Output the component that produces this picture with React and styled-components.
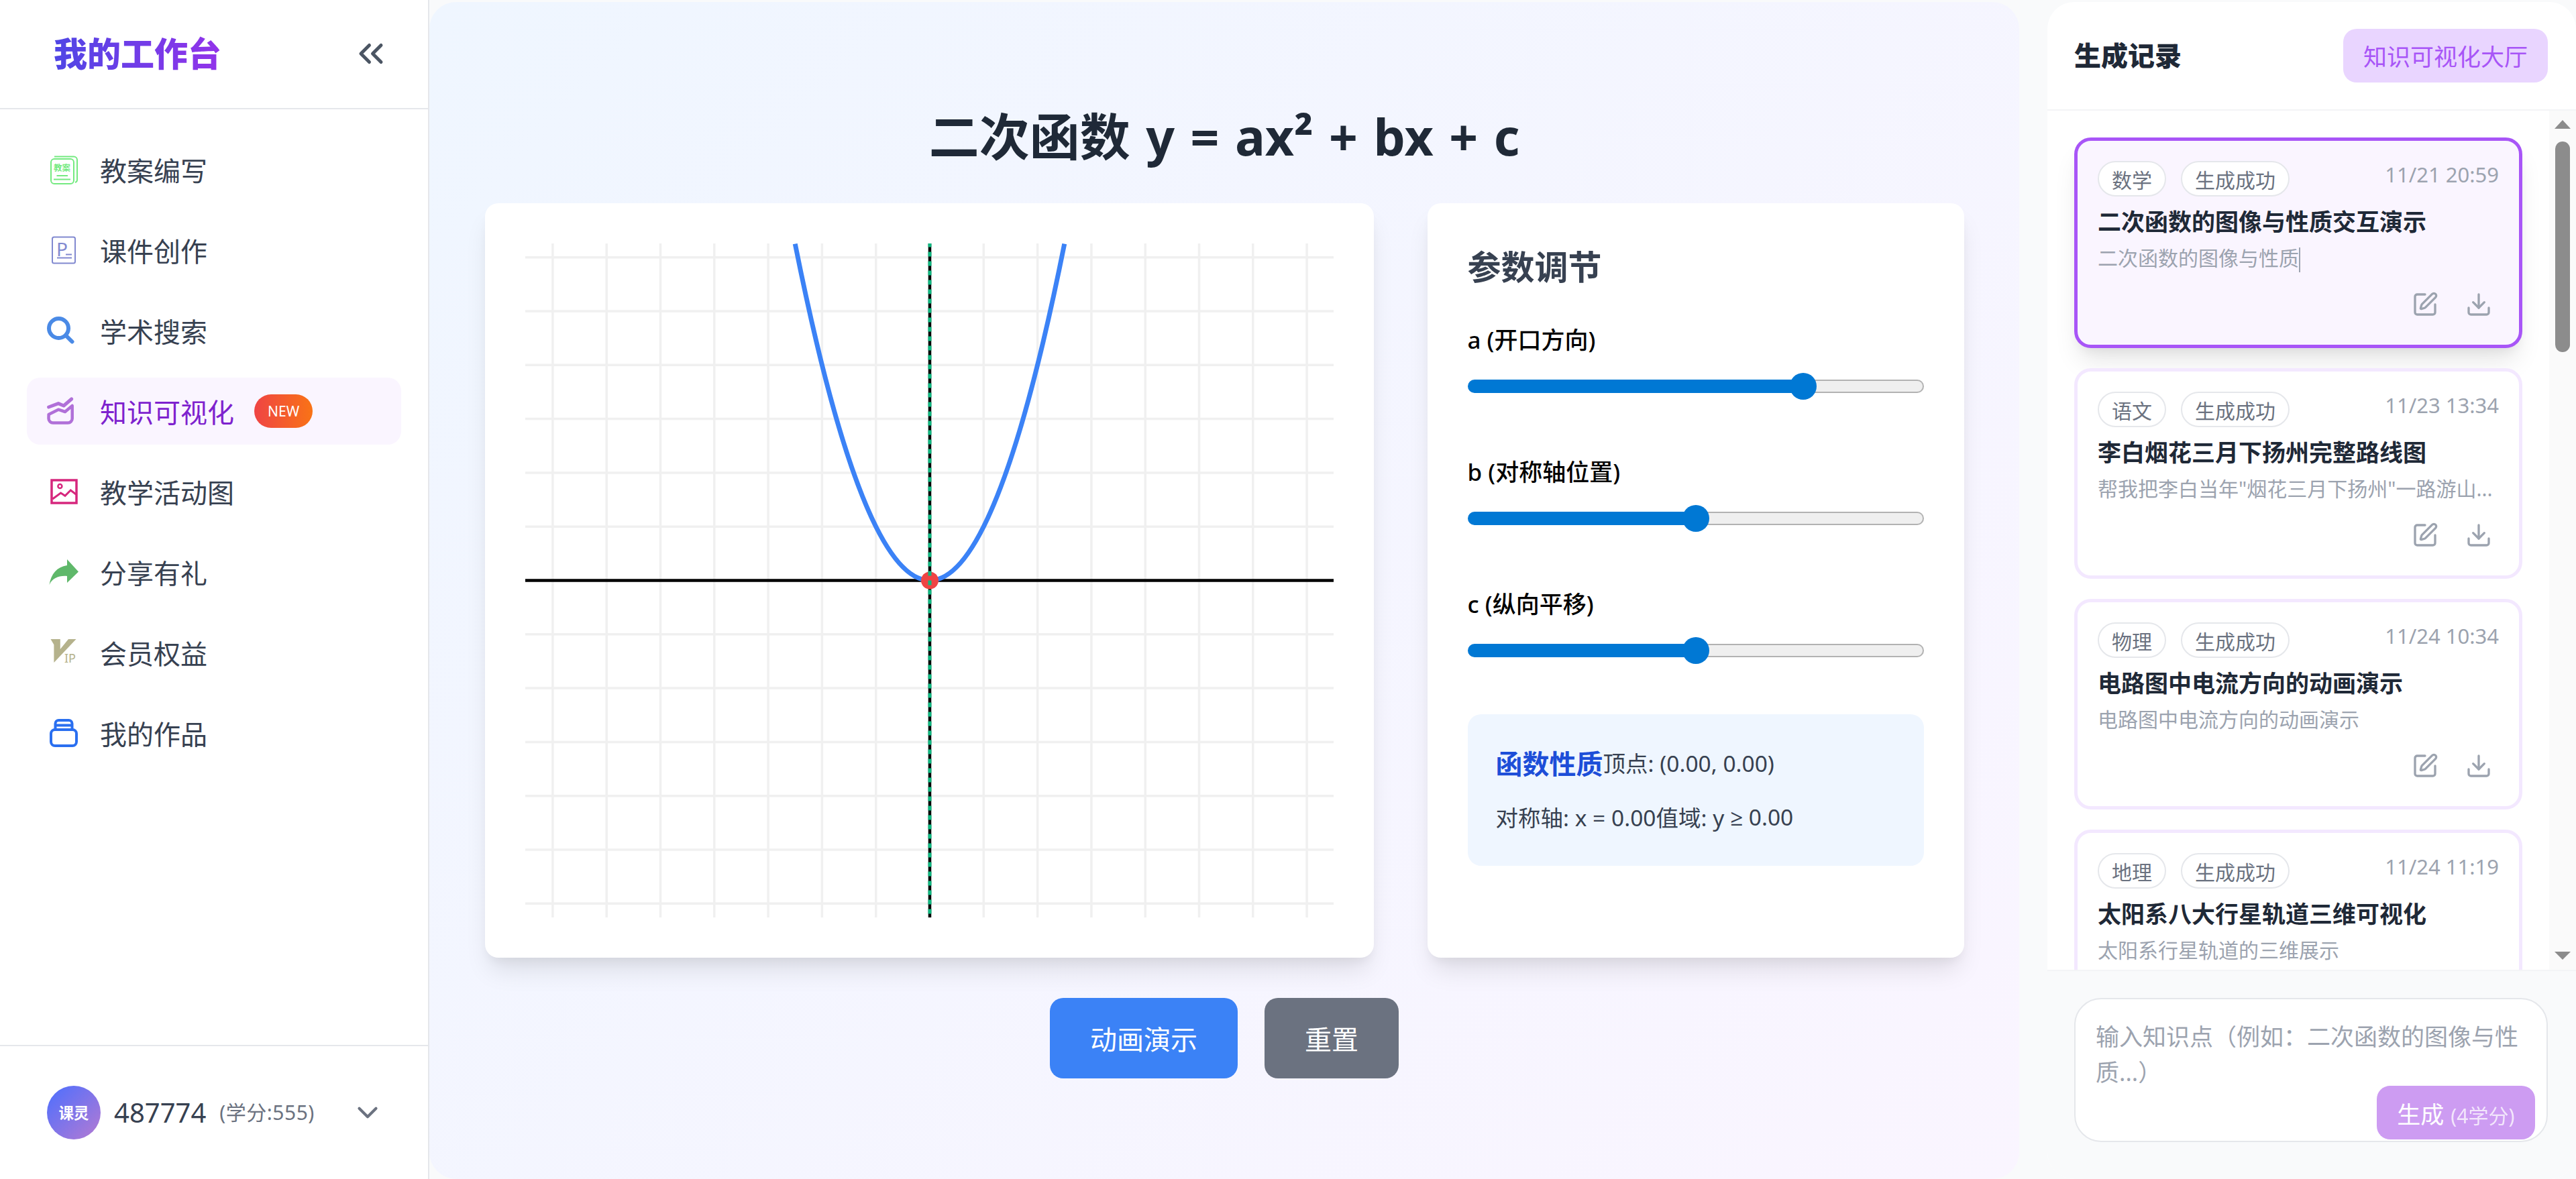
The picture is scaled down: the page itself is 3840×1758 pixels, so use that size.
import React from "react";
import styled, { createGlobalStyle } from "styled-components";
import { ChevronsLeft, ChevronDown, SquarePen, Download } from "lucide-react";

const FONT = `"Noto Sans", "Noto Sans CJK SC", sans-serif`;

const GlobalStyle = createGlobalStyle`
  html, body {
    margin: 0;
    padding: 0;
    background: #f9fafb;
    font-family: ${FONT};
  }
  * { box-sizing: border-box; }
`;

const Page = styled.div`
  display: flex;
  width: 3840px;
  height: 1758px;
  overflow: hidden;
  background: #f9fafb;
`;

/* sidebar */
const Sidebar = styled.aside`
  width: 640px;
  flex-shrink: 0;
  display: flex;
  flex-direction: column;
  background: #fff;
  border-right: 2.5px solid #e5e7eb;
`;
const SideHead = styled.div`
  height: 162.5px;
  display: flex;
  align-items: center;
  justify-content: space-between;
  padding: 0 55px 0 80px;
  border-bottom: 2.5px solid #e5e7eb;
  color: #4b5563;
`;
const Brand = styled.div`
  font-size: 50px;
  line-height: 70px;
  font-weight: 900;
  background: linear-gradient(90deg, #4f46e5, #9333ea);
  -webkit-background-clip: text;
  background-clip: text;
  color: transparent;
`;
const Nav = styled.nav`
  flex: 1;
  display: flex;
  flex-direction: column;
  gap: 20px;
  padding: 40px;
`;
const NavItem = styled.a`
  height: 100px;
  display: flex;
  align-items: center;
  gap: 29px;
  padding: 0 30px;
  border-radius: 20px;
  font-size: 40px;
  color: ${(p) => (p.$active ? "#7e22ce" : "#374151")};
  background: ${(p) => (p.$active ? "#faf5ff" : "transparent")};
  svg { flex-shrink: 0; }
`;
const NavLabel = styled.span`
  line-height: 60px;
  padding-top: 4px;
`;
const NewBadge = styled.span`
  height: 50px;
  margin-left: 1px;
  padding: 0 20px;
  display: flex;
  align-items: center;
  border-radius: 25px;
  background: linear-gradient(90deg, #ef4444, #f97316);
  color: #fff;
  font-size: 21px;
  line-height: 30px;
`;
const SideFoot = styled.div`
  height: 200.5px;
  display: flex;
  align-items: center;
  padding: 0 65px 0 70px;
  border-top: 2.5px solid #e5e7eb;
`;
const Avatar = styled.div`
  width: 80px;
  height: 80px;
  flex-shrink: 0;
  display: flex;
  align-items: center;
  justify-content: center;
  border-radius: 50%;
  background: linear-gradient(135deg, #4b6fff, #b57ad2);
  color: #fff;
  font-size: 22.5px;
  font-weight: 700;
`;
const UserName = styled.span`
  margin-left: 20px;
  font-size: 40px;
  line-height: 60px;
  color: #374151;
`;
const Credits = styled.span`
  margin-left: 20px;
  font-size: 30px;
  line-height: 45px;
  letter-spacing: 0.5px;
  color: #6b7280;
`;
const FootChevron = styled(ChevronDown)`
  margin-left: auto;
  color: #6b7280;
`;

/* middle */
const Main = styled.main`
  width: 2370px;
  flex-shrink: 0;
  margin: 2.5px 42px 0 0;
  padding-top: 155px;
  display: flex;
  flex-direction: column;
  align-items: center;
  border-radius: 40px;
  background: linear-gradient(135deg, #eff6ff, #faf5ff);
`;
const Heading = styled.h1`
  margin: 0 0 55.5px;
  font-size: 75px;
  line-height: 90px;
  font-weight: 700;
  word-spacing: 4px;
  color: #1f2937;
`;
const Cards = styled.div`
  display: flex;
  gap: 80px;
  height: 1125px;
`;
const Card = styled.section`
  width: ${(p) => p.$w}px;
  padding: 60px;
  background: #fff;
  border-radius: 20px;
  box-shadow: 0 25px 37.5px -7.5px rgba(0, 0, 0, 0.1), 0 10px 15px -5px rgba(0, 0, 0, 0.05);
`;
const Plot = styled.svg`
  display: block;
  width: 1205px;
  height: 1005px;
  filter: blur(0.5px);
`;
const PanelTitle = styled.h2`
  margin: 0 0 48px;
  font-size: 50px;
  line-height: 70px;
  font-weight: 700;
  color: #374151;
`;
const Param = styled.div`
  margin-bottom: 82px;
`;
const ParamLabel = styled.label`
  display: block;
  height: 52px;
  margin-bottom: 23px;
  font-size: 35px;
  line-height: 52px;
  font-weight: 500;
  color: #000;
`;
const Range = styled.input.attrs({ type: "range" })`
  display: block;
  width: 680px;
  height: 40px;
  margin: 0;
  background: transparent;
  -webkit-appearance: none;
  appearance: none;
  &::-webkit-slider-runnable-track {
    height: 20px;
    border: 2.5px solid transparent;
    border-radius: 10px;
    background:
      linear-gradient(90deg, #0078d4 ${(p) => p.$fill}%, transparent ${(p) => p.$fill}%) border-box,
      linear-gradient(#efefef, #efefef) padding-box,
      linear-gradient(#b2b2b2, #b2b2b2) border-box;
  }
  &::-webkit-slider-thumb {
    -webkit-appearance: none;
    width: 40px;
    height: 40px;
    margin-top: -12.5px;
    border-radius: 50%;
    background: #0078d4;
  }
`;
const Props = styled.div`
  margin-top: -7px;
  height: 226px;
  padding: 40px 42px;
  display: flex;
  flex-direction: column;
  gap: 18px;
  border-radius: 20px;
  background: #eff6ff;
`;
const PropRow = styled.div`
  height: 63px;
  display: flex;
  align-items: center;
  font-size: 33.5px;
  color: #374151;
  white-space: pre;
`;
const PropHead = styled.strong`
  font-size: 40px;
  font-weight: 700;
  color: #1d4ed8;
`;
const MathSign = styled.span`
  font-family: "Open Sans", sans-serif;
`;
const Buttons = styled.div`
  display: flex;
  gap: 40px;
  margin-top: 60px;
`;
const Btn = styled.button`
  height: 120px;
  padding: 0 60px;
  border: 0;
  border-radius: 20px;
  font-family: ${FONT};
  font-size: 40px;
  color: #fff;
  background: ${(p) => p.$bg};
`;

/* history column */
const History = styled.aside`
  width: 788px;
  flex-shrink: 0;
  margin-top: 2.5px;
  display: flex;
  flex-direction: column;
  overflow: hidden;
  background: #fff;
  border-radius: 40px;
`;
const HistoryHead = styled.div`
  height: 162.5px;
  flex-shrink: 0;
  display: flex;
  align-items: center;
  justify-content: space-between;
  padding: 0 42px 0 40px;
  border-bottom: 2.5px solid #f3f4f6;
`;
const HistoryTitle = styled.h3`
  margin: 0;
  font-size: 40px;
  line-height: 60px;
  font-weight: 900;
  color: #1f2937;
`;
const HallButton = styled.button`
  height: 80px;
  padding: 0 30px;
  border: 0;
  border-radius: 20px;
  background: #e9d5ff;
  color: #a855f7;
  font-family: ${FONT};
  font-size: 35px;
`;
const HistoryBody = styled.div`
  height: 1281px;
  flex-shrink: 0;
  display: flex;
  overflow: hidden;
`;
const RecordList = styled.div`
  flex: 1;
  display: flex;
  flex-direction: column;
  gap: 30px;
  padding: 40px;
  overflow: hidden;
`;
const Record = styled.article`
  height: 314px;
  flex-shrink: 0;
  display: flex;
  flex-direction: column;
  padding: 30px;
  border-radius: 25px;
  border: 5px solid ${(p) => (p.$selected ? "#a855f7" : "#f3e8ff")};
  background: ${(p) => (p.$selected ? "#faf5ff" : "#fff")};
  box-shadow: ${(p) =>
    p.$selected ? "0 25px 37.5px -7.5px rgba(0,0,0,0.1), 0 10px 15px -5px rgba(0,0,0,0.05)" : "none"};
`;
const RecordTop = styled.div`
  display: flex;
  align-items: flex-start;
  gap: 22px;
`;
const Tag = styled.span`
  height: 53px;
  padding: 0 19px;
  display: flex;
  align-items: center;
  border: 2.5px solid #e5e7eb;
  border-radius: 27px;
  background: #fff;
  font-size: 30px;
  color: #6b7280;
`;
const RecordDate = styled.span`
  margin-left: auto;
  font-size: 31px;
  line-height: 40px;
  color: #9ca3af;
`;
const RecordTitle = styled.div`
  margin-top: 12px;
  font-size: 35px;
  line-height: 52.5px;
  font-weight: 700;
  color: #1f2937;
  white-space: nowrap;
`;
const RecordDesc = styled.div`
  margin-top: 4px;
  font-size: 30px;
  line-height: 45px;
  color: #9ca3af;
  white-space: nowrap;
`;
const Caret = styled.span`
  display: inline-block;
  width: 1.5px;
  height: 37px;
  vertical-align: middle;
  background: #9ca3af;
`;
const RecordActions = styled.div`
  margin-top: auto;
  display: flex;
  justify-content: flex-end;
  gap: 20px;
`;
const IconBtn = styled.span`
  width: 60px;
  height: 60px;
  display: flex;
  align-items: center;
  justify-content: center;
  color: #9ca3af;
`;
const Rail = styled.div`
  width: 40px;
  flex-shrink: 0;
  padding: 14px 0 15px;
  display: flex;
  flex-direction: column;
  align-items: center;
  background: #fafafa;
`;
const RailThumb = styled.div`
  width: 22px;
  height: 314px;
  margin-top: 19px;
  margin-bottom: auto;
  border-radius: 11px;
  background: #8c8c8c;
`;
const Composer = styled.div`
  flex: 1;
  padding: 40px 42.5px 55px 40px;
  border-top: 2.5px solid #f3f4f6;
  background: #f9fafb;
`;
const InputBox = styled.div`
  position: relative;
  height: 214.5px;
  border: 2.5px solid #e5e7eb;
  border-radius: 40px;
  background: #fff;
`;
const Prompt = styled.textarea`
  display: block;
  width: 100%;
  height: 100%;
  padding: 30px;
  border: 0;
  outline: 0;
  resize: none;
  background: transparent;
  font-family: ${FONT};
  font-size: 35px;
  line-height: 52.5px;
  &::placeholder { color: #9ca3af; opacity: 1; }
`;
const GenerateBtn = styled.button`
  position: absolute;
  right: 17px;
  bottom: 1.5px;
  height: 80px;
  padding: 0 30px;
  border: 0;
  border-radius: 20px;
  background: #cd9cf2;
  color: #fff;
  font-family: ${FONT};
  font-size: 35px;
  white-space: nowrap;
`;
const Cost = styled.span`
  margin-left: 10px;
  font-size: 30px;
  opacity: 0.75;
`;

/* drawn nav icons, all in a 50 box */
const LessonIcon = () => (
  <svg width="50" height="50" viewBox="0 0 50 50" fill="none" stroke="#74ea80" strokeWidth="2">
    <rect x="6" y="9" width="34" height="37" rx="5" />
    <path d="M11 5.5h29a5 5 0 0 1 5 5V40a4 4 0 0 1-3 4" />
    <text x="10" y="27" fontSize="12.5" fontWeight="700" fill="#74ea80" stroke="none">教案</text>
    <path d="M14.5 34H31M10 39.5h25" />
  </svg>
);
const SlideIcon = () => (
  <svg width="50" height="50" viewBox="0 0 50 50" fill="none" stroke="#8189d0" strokeWidth="2">
    <rect x="8" y="5.5" width="34" height="39" rx="2.5" />
    <text x="14" y="34" fontSize="28" fill="#8189d0" stroke="none">P</text>
    <path d="M28 31.5h9M15 36.5h22" strokeWidth="2" />
  </svg>
);
const SearchIcon = () => (
  <svg width="50" height="50" viewBox="0 0 50 50" fill="none" stroke="#4a8ae6" strokeWidth="6" strokeLinecap="round">
    <circle cx="17.5" cy="21.5" r="14.5" />
    <path d="M28.5 32.5L37.5 41.5" />
  </svg>
);
const ChartIcon = () => (
  <svg width="50" height="50" viewBox="0 0 50 50" fill="none" stroke="#b070d8" strokeWidth="5" strokeLinecap="round" strokeLinejoin="round">
    <path d="M2.6 19L17 13.6L25 17L36.6 7" />
    <path d="M2.6 30L17 22.7L27 26L37.7 17V36a6.5 6.5 0 0 1-6.5 6.5H9a6.5 6.5 0 0 1-6.5-6.5z" strokeWidth="4.5" />
  </svg>
);
const PictureIcon = () => (
  <svg width="50" height="50" viewBox="0 0 50 50" fill="none" stroke="#d6277d" strokeWidth="3.5">
    <rect x="7" y="8" width="37" height="34" />
    <circle cx="19.4" cy="17" r="3" strokeWidth="2.5" />
    <path d="M8.4 36L20.6 27L27 31.3L35.3 23L43.5 29.3" strokeWidth="3" />
  </svg>
);
const ShareIcon = () => (
  <svg width="50" height="50" viewBox="0 0 50 50">
    <path d="M30 6L47 24.5L30 41V31C18 30 8 34 3.5 44C6 28 15 17 30 15Z" fill="#5fb86a" />
  </svg>
);
const VipIcon = () => (
  <svg width="50" height="50" viewBox="0 0 50 50">
    <path d="M5.5 5H19.8V20L32 5H43.5L10.4 40V13.3Z" fill="#b5b28c" />
    <text x="26" y="40" fontSize="18" fill="#b5b28c">IP</text>
  </svg>
);
const WorksIcon = () => (
  <svg width="50" height="50" viewBox="0 0 50 50" fill="none" stroke="#2a6ff0" strokeWidth="4">
    <rect x="6" y="20" width="38" height="24" rx="6" />
    <path d="M12.5 20V11a5 5 0 0 1 5-5h15a5 5 0 0 1 5 5v9M12.5 13.5h25" />
  </svg>
);

const navItems = [
  { label: "教案编写", Icon: LessonIcon },
  { label: "课件创作", Icon: SlideIcon },
  { label: "学术搜索", Icon: SearchIcon },
  { label: "知识可视化", Icon: ChartIcon, active: true },
  { label: "教学活动图", Icon: PictureIcon },
  { label: "分享有礼", Icon: ShareIcon },
  { label: "会员权益", Icon: VipIcon },
  { label: "我的作品", Icon: WorksIcon },
];

const params = [
  { label: "a (开口方向)", value: 75.3 },
  { label: "b (对称轴位置)", value: 50 },
  { label: "c (纵向平移)", value: 50 },
];

const records = [
  { subject: "数学", date: "11/21 20:59", title: "二次函数的图像与性质交互演示", desc: "二次函数的图像与性质", selected: true },
  { subject: "语文", date: "11/23 13:34", title: "李白烟花三月下扬州完整路线图", desc: "帮我把李白当年\"烟花三月下扬州\"一路游山..." },
  { subject: "物理", date: "11/24 10:34", title: "电路图中电流方向的动画演示", desc: "电路图中电流方向的动画演示" },
  { subject: "地理", date: "11/24 11:19", title: "太阳系八大行星轨道三维可视化", desc: "太阳系行星轨道的三维展示" },
];

// plot numbers
const UNIT = 80.3;
const CX = 603;
const CY = 502.5;
const steps = (n) => Array.from({ length: n * 2 + 1 }, (_, i) => i - n);

function Parabola() {
  return (
    <Plot viewBox="0 0 1205 1005">
      <g stroke="#f0f0f0" strokeWidth="3.5">
        {steps(7).map((k) => (
          <line key={k} x1={CX + k * UNIT} x2={CX + k * UNIT} y1="0" y2="1005" />
        ))}
        {steps(6).map((k) => (
          <line key={k} x1="0" x2="1205" y1={CY + k * UNIT} y2={CY + k * UNIT} />
        ))}
      </g>
      <line x1="0" x2="1205" y1={CY} y2={CY} stroke="#000" strokeWidth="4.5" />
      <line x1={CX} x2={CX} y1="0" y2="1005" stroke="#000" strokeWidth="4.5" />
      <path
        d={`M${CX - 2.5 * UNIT} ${CY - 6.25 * UNIT}Q${CX} ${CY + 6.25 * UNIT} ${CX + 2.5 * UNIT} ${CY - 6.25 * UNIT}`}
        fill="none"
        stroke="#3b82f6"
        strokeWidth="7"
      />
      <circle cx={CX} cy={CY} r="13" fill="#ef4444" />
      <line x1={CX} x2={CX} y1="0" y2="1005" stroke="#10b981" strokeWidth="5" strokeDasharray="7 7" strokeDashoffset="-12.5" />
    </Plot>
  );
}

export default function App() {
  return (
    <Page>
      <GlobalStyle />
      <Sidebar>
        <SideHead>
          <Brand>我的工作台</Brand>
          <ChevronsLeft size={60} strokeWidth={2} />
        </SideHead>
        <Nav>
          {navItems.map(({ label, Icon, active }) => (
            <NavItem key={label} $active={active}>
              <Icon />
              <NavLabel>{label}</NavLabel>
              {active && <NewBadge>NEW</NewBadge>}
            </NavItem>
          ))}
        </Nav>
        <SideFoot>
          <Avatar>课灵</Avatar>
          <UserName>487774</UserName>
          <Credits>(学分:555)</Credits>
          <FootChevron size={50} strokeWidth={2} />
        </SideFoot>
      </Sidebar>

      <Main>
        <Heading>二次函数 y = ax² + bx + c</Heading>
        <Cards>
          <Card $w={1325}>
            <Parabola />
          </Card>
          <Card $w={800}>
            <PanelTitle>参数调节</PanelTitle>
            {params.map((p) => (
              <Param key={p.label}>
                <ParamLabel>{p.label}</ParamLabel>
                <Range min="0" max="100" step="0.1" defaultValue={p.value} $fill={((20 + (p.value / 100) * 640) / 680) * 100} />
              </Param>
            ))}
            <Props>
              <PropRow>
                <PropHead>函数性质</PropHead>顶点: (0.00, 0.00)
              </PropRow>
              <PropRow>对称轴: x = 0.00值域: y <MathSign>≥</MathSign> 0.00</PropRow>
            </Props>
          </Card>
        </Cards>
        <Buttons>
          <Btn $bg="#3b82f6">动画演示</Btn>
          <Btn $bg="#6b7280">重置</Btn>
        </Buttons>
      </Main>

      <History>
        <HistoryHead>
          <HistoryTitle>生成记录</HistoryTitle>
          <HallButton>知识可视化大厅</HallButton>
        </HistoryHead>
        <HistoryBody>
          <RecordList>
            {records.map((r) => (
              <Record key={r.title} $selected={r.selected}>
                <RecordTop>
                  <Tag>{r.subject}</Tag>
                  <Tag>生成成功</Tag>
                  <RecordDate>{r.date}</RecordDate>
                </RecordTop>
                <RecordTitle>{r.title}</RecordTitle>
                <RecordDesc>
                  {r.desc}
                  {r.selected && <Caret />}
                </RecordDesc>
                <RecordActions>
                  <IconBtn><SquarePen size={40} /></IconBtn>
                  <IconBtn><Download size={40} /></IconBtn>
                </RecordActions>
              </Record>
            ))}
          </RecordList>
          <Rail>
            <svg width="24" height="13" viewBox="0 0 24 13"><path d="M12 0L24 13H0Z" fill="#8c8c8c" /></svg>
            <RailThumb />
            <svg width="24" height="12" viewBox="0 0 24 12"><path d="M0 0H24L12 12Z" fill="#8c8c8c" /></svg>
          </Rail>
        </HistoryBody>
        <Composer>
          <InputBox>
            <Prompt placeholder="输入知识点（例如：二次函数的图像与性质...）" />
            <GenerateBtn>生成<Cost>(4学分)</Cost></GenerateBtn>
          </InputBox>
        </Composer>
      </History>
    </Page>
  );
}
